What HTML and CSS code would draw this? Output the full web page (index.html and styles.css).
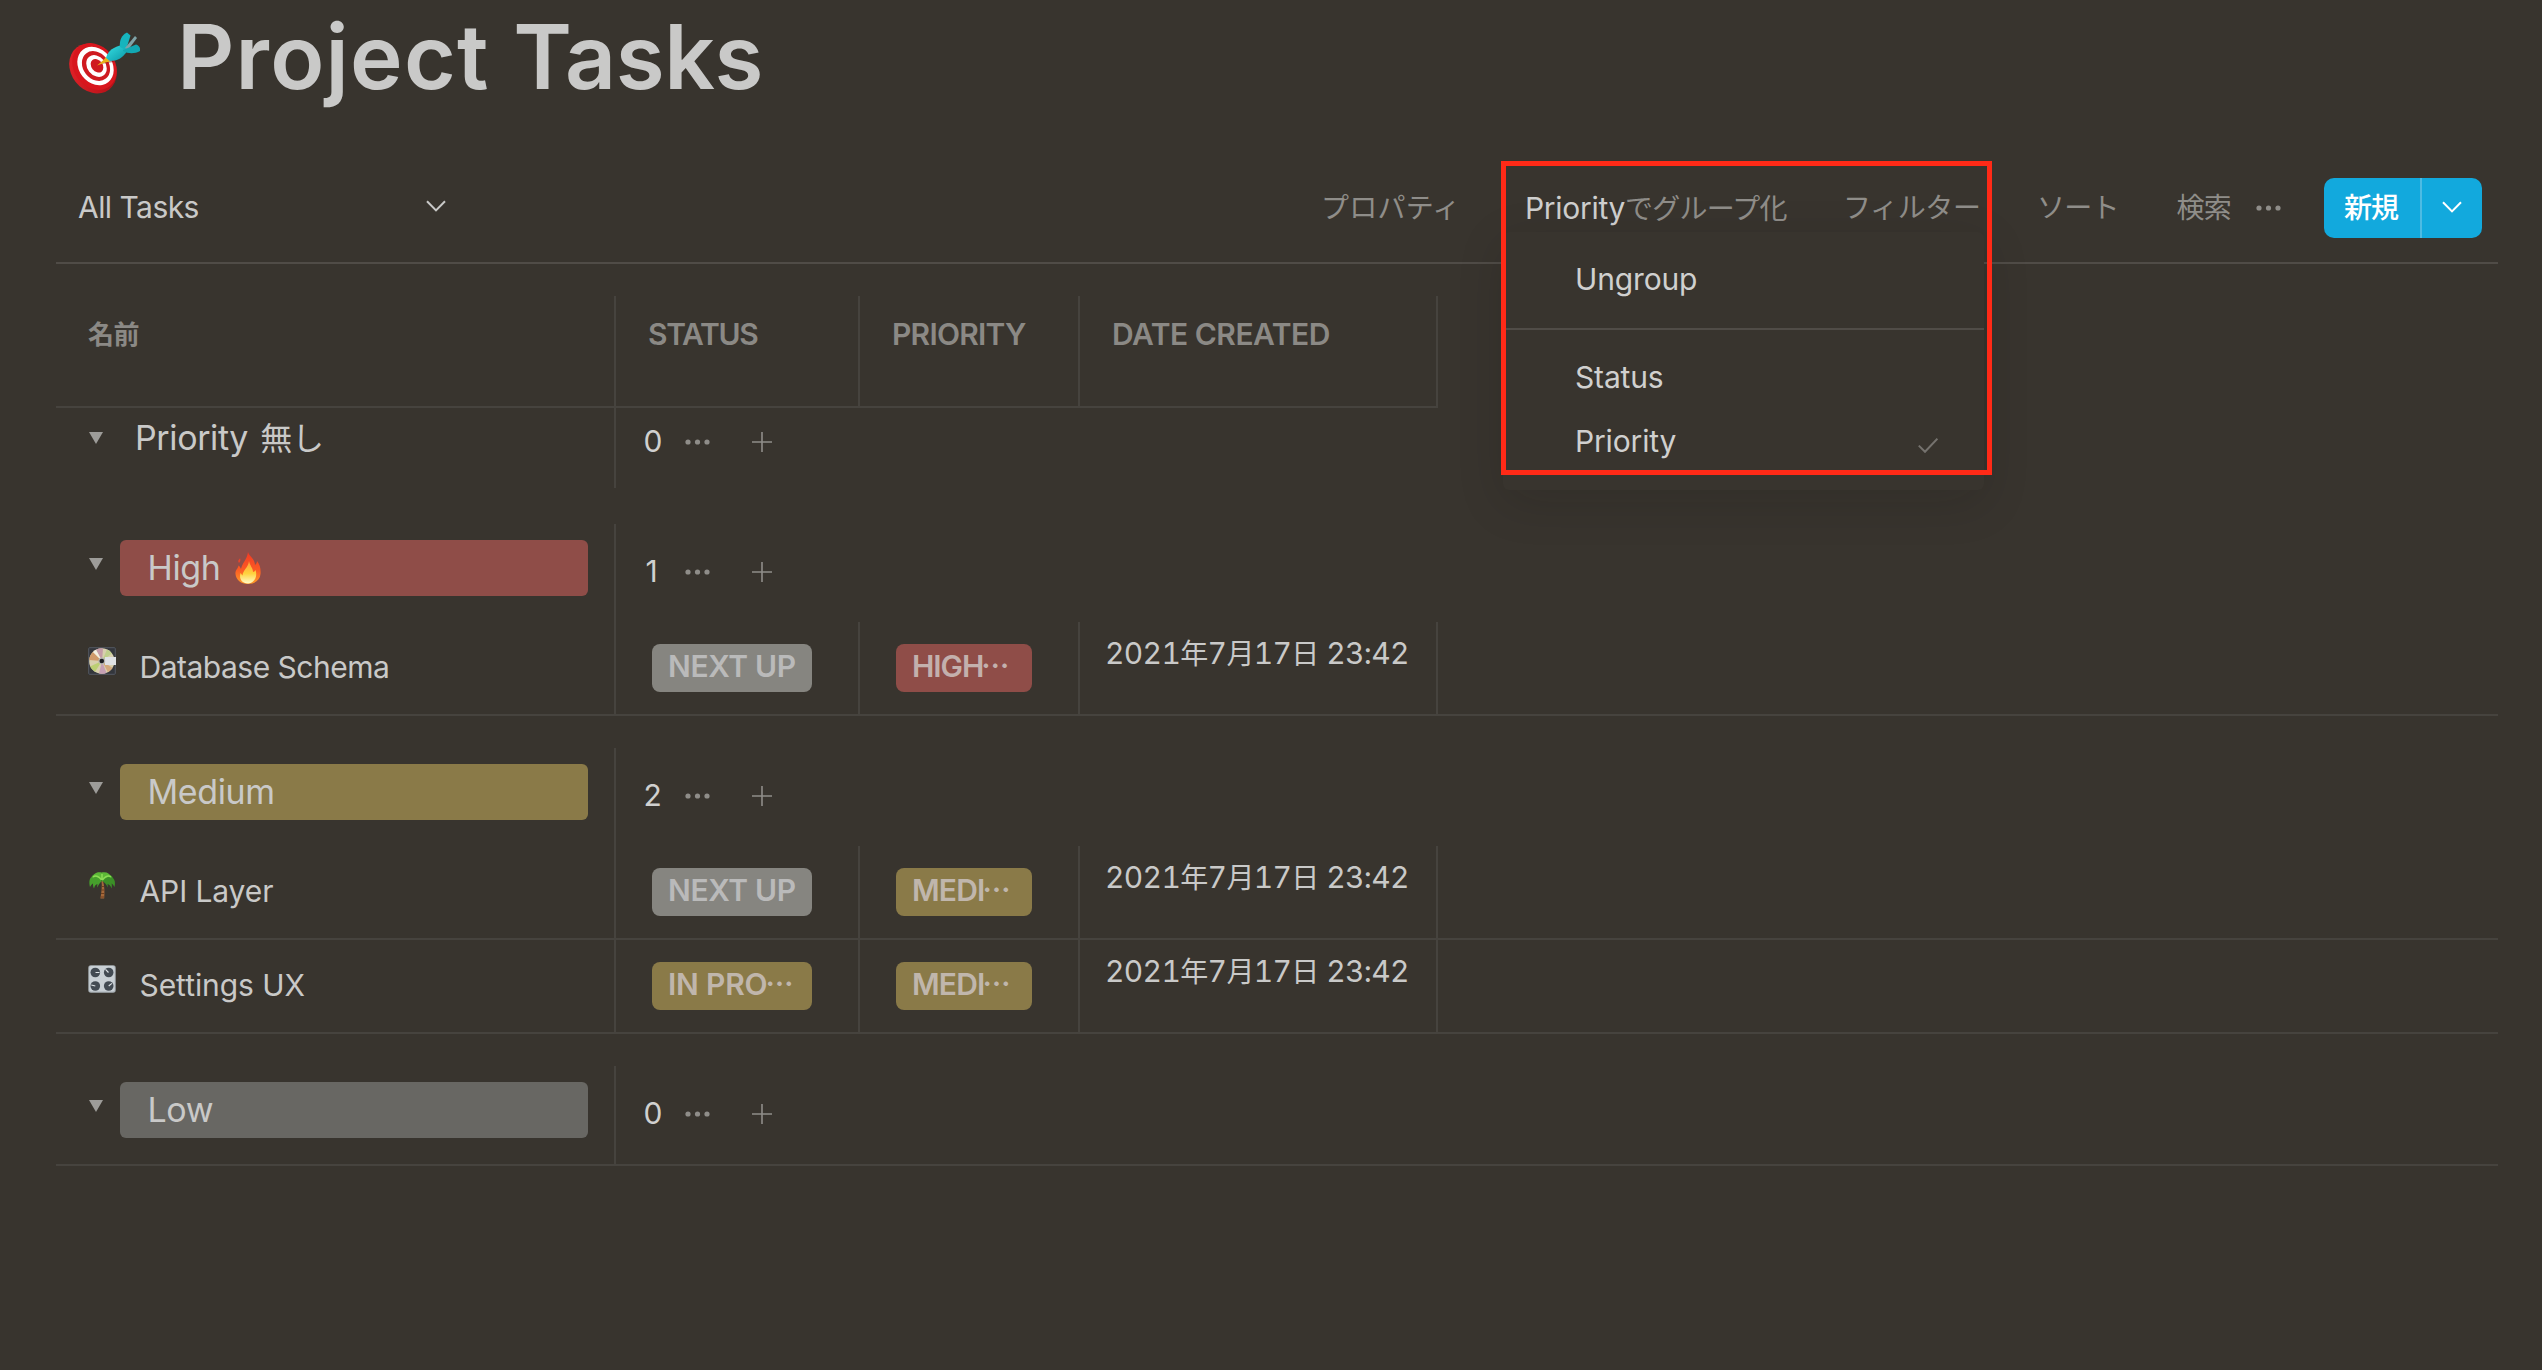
FILE: index.html
```html
<!DOCTYPE html>
<html lang="ja">
<head>
<meta charset="utf-8">
<title>Project Tasks</title>
<link rel="stylesheet" href="styles.css">
</head>
<body>
<svg class="defs" width="0" height="0" aria-hidden="true">
  <symbol id="i-chevron" viewBox="0 0 20 12"><path d="M1 1.2 10 10.4 19 1.2" fill="none" stroke="currentColor" stroke-width="2"/></symbol>
  <symbol id="i-dots" viewBox="0 0 26 6"><circle cx="3" cy="3" r="2.6"/><circle cx="12.500" cy="3" r="2.600"/><circle cx="22" cy="3" r="2.600"/></symbol>
  <symbol id="i-plus" viewBox="0 0 20 20"><path d="M10 0v20M0 10h20" fill="none" stroke="currentColor" stroke-width="1.6"/></symbol>
  <symbol id="i-tri" viewBox="0 0 14 12"><path d="M0 0h14L7 12z"/></symbol>
  <symbol id="i-check" viewBox="0 0 20 15"><path d="M.8 7.6 7 13.8 19.4.8" fill="none" stroke="currentColor" stroke-width="2"/></symbol>
</svg>

<header class="title-bar">
  <svg class="title-icon" viewBox="0 0 72 64">
    <defs>
      <linearGradient id="rim" x1="0" y1="0" x2="1" y2="1"><stop offset="0" stop-color="#e8242a"/><stop offset="1" stop-color="#a80d14"/></linearGradient>
      <linearGradient id="dart" x1="0" y1="0" x2="1" y2="1"><stop offset="0" stop-color="#36e0e4"/><stop offset="1" stop-color="#0b97a6"/></linearGradient>
    </defs>
    <ellipse cx="25" cy="37.500" rx="22" ry="26.5" transform="rotate(-38 25 37.500)" fill="url(#rim)"/>
    <ellipse cx="26.500" cy="35.500" rx="20.5" ry="25" transform="rotate(-38 26.500 35.500)" fill="#d8161d"/>
    <ellipse cx="27.500" cy="35" rx="16.6" ry="20.6" transform="rotate(-38 27.500 35)" fill="#fff"/>
    <ellipse cx="28" cy="35" rx="12.8" ry="16" transform="rotate(-38 28 35)" fill="#cf1a20"/>
    <ellipse cx="28.500" cy="35" rx="9.2" ry="11.8" transform="rotate(-38 28.500 35)" fill="#fff"/>
    <ellipse cx="29" cy="34.8" rx="5.6" ry="7.4" transform="rotate(-38 29 34.8)" fill="#cf1a20"/>
    <path d="M33 33 41 25 46 31z" fill="#7a1216" opacity=".45"/>
    <path d="M29 34.5 36 28.5 38 26l4 4.5-4.5 1z" fill="#e9b21c"/>
    <path d="M38 27C40 19 46 16 54 14l5 6C55 27 49 30 42 30z" fill="url(#dart)"/>
    <path d="M52 16C51 9 54 4 59 1.500l3.500 3L58 19z" fill="#16b4bd"/>
    <path d="M57 17 67 5l2 2-9 12z" fill="#7fa3a8"/>
    <path d="M55 19l13-5.500c3 1 5 4 4 6.500-5 3-12 3-17 0z" fill="#12a8b3"/>
  </svg>
  <h1 class="title"><span>Project</span> <span>Tasks</span></h1>
</header>

<nav class="toolbar">
  <div class="view-select">
    <span class="view-name">All Tasks</span>
    <svg class="chevron"><use href="#i-chevron"/></svg>
  </div>
  <div class="actions">
    <span class="action a-prop">プロパティ</span>
    <span class="action a-group"><b>Priority</b>でグループ化</span>
    <span class="action a-filter">フィルター</span>
    <span class="action a-sort">ソート</span>
    <span class="action a-search">検索</span>
    <svg class="dots"><use href="#i-dots"/></svg>
    <div class="new-btn"><span class="new-label">新規</span><span class="new-more"><svg class="chevron"><use href="#i-chevron"/></svg></span></div>
  </div>
  <div class="menu">
    <div class="menu-section"><div class="menu-item">Ungroup</div></div>
    <div class="menu-section">
      <div class="menu-item">Status</div>
      <div class="menu-item">Priority<svg class="check"><use href="#i-check"/></svg></div>
    </div>
  </div>
  <div class="highlight"></div>
</nav>

<main class="table">
  <div class="head">
    <div class="h-name">名前</div>
    <div class="h-status">STATUS</div>
    <div class="h-priority">PRIORITY</div>
    <div class="h-date">DATE CREATED</div>
  </div>

  <section class="group ungrouped">
    <div class="group-head">
      <div class="group-label"><svg class="tri"><use href="#i-tri"/></svg><span class="label-text">Priority <span class="jp-label">無し</span></span></div>
      <div class="group-count"><span>0</span><svg class="dots"><use href="#i-dots"/></svg><svg class="plus"><use href="#i-plus"/></svg></div>
    </div>
  </section>

  <section class="group">
    <div class="group-head">
      <div class="group-label"><svg class="tri"><use href="#i-tri"/></svg><span class="label-text pill red">High
        <svg class="fire" viewBox="0 0 26 32">
          <defs><linearGradient id="flame" x1="0" y1="0" x2="0" y2="1"><stop offset="0" stop-color="#f23a24"/><stop offset=".55" stop-color="#fb5a24"/><stop offset="1" stop-color="#ff9c26"/></linearGradient>
          <linearGradient id="core" x1="0" y1="0" x2="0" y2="1"><stop offset="0" stop-color="#ff9a3a"/><stop offset=".55" stop-color="#ffd23c"/><stop offset="1" stop-color="#fffbc8"/></linearGradient></defs>
          <path d="M13 0c1 4 7 7 7 13 1-1 2-2 2-4 3 4 4 8 3.500 13C25 28 20 32 13 32S1 28 .5 22C0 18 3 17 3.500 13.500 5 14.500 5.500 16 6 17 7 11 12 8 13 0z" fill="url(#flame)"/>
          <path d="M3.200 9.500c0-2 1.500-2 1.800-3.500.8 2 .3 4-1 5z" fill="#e8452c"/>
          <path d="M14 9c1 5 4 7 4 11 1 0 2-1 2.500-2 2 5 0 13-7.500 13.500C6 31.500 4 26 5.500 21c1 1 1.500 2 2 2.500C8 18 13 16 14 9z" fill="url(#core)"/>
        </svg></span></div>
      <div class="group-count"><span class="one">1</span><svg class="dots"><use href="#i-dots"/></svg><svg class="plus"><use href="#i-plus"/></svg></div>
    </div>
    <div class="row">
      <div class="c-name">
        <svg class="icon" viewBox="0 0 28 28">
          <rect width="28" height="28" rx="1.500" fill="#33363c"/><rect x=".7" y=".7" width="26.600" height="26.600" rx="1" fill="none" stroke="#54585f"/>
          <circle cx="13.800" cy="14" r="12.700" fill="#d8cfae"/>
          <path d="M14 14 8 2.800A12.700 12.700 0 0 1 15 1.400z" fill="#c39ba6"/>
          <path d="M14 14 1.200 13A12.700 12.700 0 0 1 5 4.900z" fill="#cf9a6a"/>
          <path d="M14 14 19 2.400A12.700 12.700 0 0 1 24 6.500z" fill="#bfcf8c"/>
          <path d="M14 14 2 19.500A12.700 12.700 0 0 0 7 24.700z" fill="#bccf74"/>
          <path d="M14 14 11 26.500A12.700 12.700 0 0 0 18.500 25.900z" fill="#c6a0b4"/>
          <path d="M14 14 20 25.200A12.700 12.700 0 0 0 24.600 21z" fill="#d3a97c"/>
          <path d="M14 14 5 4.900A12.700 12.700 0 0 1 8 2.800z" fill="#f3efe0"/>
          <rect x="17" y="10" width="11" height="8" fill="#dfe1e4"/>
          <circle cx="13.800" cy="14" r="3.400" fill="#b7b7b2"/><circle cx="13.800" cy="14" r="2.300" fill="#1e1f22"/>
        </svg>
        <span class="name n-database">Database Schema</span>
      </div>
      <div class="c-status"><span class="tag gray t-next">NEXT UP</span></div>
      <div class="c-priority"><span class="tag red t-high">HIGH<span class="jp">…</span></span></div>
      <div class="c-date">2021<span class="jp">年</span>7<span class="jp">月</span>17<span class="jp">日</span> 23:42</div>
    </div>
  </section>

  <section class="group">
    <div class="group-head">
      <div class="group-label"><svg class="tri"><use href="#i-tri"/></svg><span class="label-text pill yellow">Medium</span></div>
      <div class="group-count"><span>2</span><svg class="dots"><use href="#i-dots"/></svg><svg class="plus"><use href="#i-plus"/></svg></div>
    </div>
    <div class="row">
      <div class="c-name">
        <svg class="icon" viewBox="0 0 28 28">
          <path d="M15 10c1.500 5 1.800 11 1.200 17.500h-3.800C13.500 21 14.300 15 13.500 10z" fill="#a5683a"/>
          <path d="M13.600 15.500h2.600M13.400 19h2.900M13 22.500h3.400M12.600 26h3.600" stroke="#6e3f1e" stroke-width="1"/>
          <path d="M14 10C10 3 5 1.500 3.500 6 1 8 1 12 2 16c1-2 2-3 3-3.500 0 1.500 0 3.500 1 5 .8-3 2-4 3.500-4.500-.3 1-.3 2 0 3.500C10.500 13 12 12 14 10z" fill="#469f2c"/>
          <path d="M14 10c3.500-7 9-8 11-3 2 2 2.500 5 1.500 9-1.500-2.500-2-3-3-3.500.5 1.500.5 3 0 5-1-3-2.500-4-4-4.500.3 1 .3 2 0 3.500C18.500 13 17 12 14 10z" fill="#3b8f27"/>
          <path d="M4 7C6 1.500 10 .500 13.500 1.500 18 .300 22 2 24 7c-3-2-6-1-9.500 3C11 6 7 5 4 7z" fill="#5cb837"/>
          <path d="M13.500 9C11.500 5.500 8 4 5 6M14.500 9C16.500 5.500 20 4 23 6M14 9V3" fill="none" stroke="#8bdc55" stroke-width="1.500"/>
        </svg>
        <span class="name n-api">API Layer</span>
      </div>
      <div class="c-status"><span class="tag gray t-next">NEXT UP</span></div>
      <div class="c-priority"><span class="tag yellow t-medi">MEDI<span class="jp">…</span></span></div>
      <div class="c-date">2021<span class="jp">年</span>7<span class="jp">月</span>17<span class="jp">日</span> 23:42</div>
    </div>
    <div class="row">
      <div class="c-name">
        <svg class="icon" viewBox="0 0 28 28">
          <rect x=".3" y=".3" width="27.400" height="27.400" rx="2.600" fill="#a9b1b7"/><rect x="1.300" y="1" width="25.400" height="25.400" rx="2" fill="#c9d0d5"/>
          <g fill="#434b53"><circle cx="7.300" cy="7.500" r="4.800"/><circle cx="20.700" cy="7.500" r="4.800"/><circle cx="7.300" cy="21" r="4.800"/><circle cx="20.700" cy="21" r="4.800"/></g>
          <path d="M7.500 7.500h4M20.500 7.500l-3-3.200M7.300 21l-4-1M20.700 21l3.200-2.600" stroke="#dfe4e7" stroke-width="1.200"/>
        </svg>
        <span class="name n-settings">Settings UX</span>
      </div>
      <div class="c-status"><span class="tag yellow t-prog">IN PRO<span class="jp">…</span></span></div>
      <div class="c-priority"><span class="tag yellow t-medi">MEDI<span class="jp">…</span></span></div>
      <div class="c-date">2021<span class="jp">年</span>7<span class="jp">月</span>17<span class="jp">日</span> 23:42</div>
    </div>
  </section>

  <section class="group last">
    <div class="group-head">
      <div class="group-label"><svg class="tri"><use href="#i-tri"/></svg><span class="label-text pill dim">Low</span></div>
      <div class="group-count"><span>0</span><svg class="dots"><use href="#i-dots"/></svg><svg class="plus"><use href="#i-plus"/></svg></div>
    </div>
  </section>
</main>
</body>
</html>
```
FILE: styles.css
```css
* { box-sizing: border-box; }
html, body { margin: 0; }
body {
  min-height: 1370px;
  padding: 0 44px 0 56px;
  background: #38342e;
  color: #c9c9c8;
  font: 400 30px/40px Inter, "Noto Sans CJK JP", sans-serif;
}
svg { display: block; flex: none; fill: currentColor; }
.defs { position: absolute; }

/* Page title */
.title-bar { display: flex; height: 152px; padding-left: 12px; }
.title-icon { width: 72px; height: 64px; margin-top: 31px; }
.title { margin: 0 0 0 37px; font-size: 89px; font-weight: 600; line-height: 113px; letter-spacing: 1.2px; white-space: nowrap; }
.title span + span { letter-spacing: -.4px; }

/* Toolbar */
.toolbar {
  position: relative;
  display: flex;
  justify-content: space-between;
  align-items: center;
  height: 112px;
  padding: 0 16px 0 22px;
  border-bottom: 2px solid #504c47;
}
.view-select { display: flex; align-items: center; justify-content: space-between; width: 368px; }
.view-name { letter-spacing: -.55px; }
.chevron { width: 20px; height: 12px; margin-top: -3px; }
.actions {
  display: grid;
  grid-template-columns: 204px 318px 194px 139.500px 79px 68.500px 158px;
  align-items: center;
  color: #8f8d89;
}
.action { padding-top: 2px; font-size: 28px; white-space: nowrap; }
.a-prop { letter-spacing: .25px; }
.a-group { letter-spacing: -.8px; }
.a-group b { color: #cfcfce; font-size: 30px; font-weight: 400; letter-spacing: -.3px; }
.a-filter { letter-spacing: -.38px; }
.a-sort, .a-search { letter-spacing: -.8px; }
.dots { width: 26px; height: 6px; margin-top: 2px; }
.new-btn { display: flex; height: 60px; margin-top: 2px; overflow: hidden; border-radius: 10px; background: #12a9dd; color: #fff; }
.new-label { width: 98px; padding-left: 20px; border-right: 2px solid #4dbbe3; font-size: 28px; font-weight: 500; line-height: 60px; letter-spacing: -1px; }
.new-more { display: flex; flex: 1; align-items: center; justify-content: center; }

/* Grouping menu */
.menu {
  position: absolute;
  top: 80px;
  left: 1447px;
  width: 481px;
  border-radius: 6px;
  background: #38342e;
  box-shadow: 0 12px 48px rgba(15, 15, 15, .14);
}
.menu-section { padding: 15px 0 17px; }
.menu-section + .menu-section { border-top: 2px solid #504c47; }
.menu-item { display: flex; align-items: center; justify-content: space-between; height: 64px; padding: 0 46px 0 72px; color: #d0d0cf; letter-spacing: -.15px; }
.check { width: 20px; height: 15px; margin-top: 9px; color: #75726e; }
.highlight { position: absolute; top: 8.500px; left: 1444.500px; width: 491px; height: 314px; border: 5px solid #ff2a17; }

/* Table */
.table { padding-top: 32px; }
.head, .row { display: grid; grid-template-columns: 560px 244px 220px 358px; }
.head { width: 1382px; height: 112px; border-bottom: 2px solid #46433e; color: #8b8985; font-weight: 600; }
.head > div { padding: 18px 0 0 32px; border-right: 2px solid #46433e; }
.head .h-name { padding-top: 19px; font-size: 26px; font-weight: 700; letter-spacing: -.5px; }
.h-status { letter-spacing: -1.300px; }
.h-priority { letter-spacing: -.76px; }
.h-date { letter-spacing: -.5px; }

.group { margin-top: 32px; }
.group.ungrouped { margin: 0 0 36px; }
.ungrouped + .group { margin-top: 0; }
.group.last { border-bottom: 2px solid #46433e; }
.group-head { display: grid; grid-template-columns: 560px 1fr; height: 98px; }
.ungrouped .group-head { height: 80px; }
.group-label { display: flex; padding: 16px 26px 0 33px; border-right: 2px solid #46433e; }
.tri { width: 14px; height: 12px; margin: 18px 17px 0 0; color: #9d9c99; }
.label-text { flex: 1; height: 56px; padding-left: 15px; font-size: 34px; line-height: 55px; letter-spacing: -.38px; }
.jp-label { margin-left: 3px; font-size: 32px; line-height: 0; }
.label-text.pill { display: flex; padding-left: 27.500px; border-radius: 6px; }
.ungrouped .group-label { padding-top: 2px; }
.ungrouped .tri { margin-top: 22px; }
.fire { width: 26px; height: 32px; margin: 12px 0 0 15px; }
.group-count {
  display: grid;
  grid-template-columns: 41px 67px 20px;
  align-items: center;
  align-self: start;
  height: 40px;
  margin-top: 27px;
  padding-left: 27.500px;
  color: #d0d0cf;
}
.ungrouped .group-count { margin-top: 13px; }
.one { padding-left: 2px; }
.group-count svg { color: #8f8d89; }
.plus { width: 20px; height: 20px; margin-top: 2px; }

.row { height: 94px; border-bottom: 2px solid #46433e; }
.row > div { border-right: 2px solid #46433e; }
.c-name { display: flex; padding: 25px 0 0 32px; }
.icon { width: 28px; height: 28px; margin: 0 23.500px 0 0; }
.n-database { letter-spacing: -.5px; }
.n-api { letter-spacing: -.1px; }
.n-settings { letter-spacing: -.06px; }
.c-status, .c-priority { padding: 22px 0 0 36px; }
.tag { display: block; width: 160px; height: 48px; padding-left: 16px; border-radius: 8px; font-weight: 600; line-height: 44px; white-space: nowrap; }
.c-priority .tag { width: 136px; }
.jp { font-family: "Noto Sans CJK JP", sans-serif; font-size: 28px; line-height: 0; }
.tag .jp { margin-left: -2px; }
.t-next { letter-spacing: -.35px; }
.t-prog { letter-spacing: -.21px; }
.t-high { letter-spacing: -1.050px; }
.t-medi { letter-spacing: -.83px; }
.c-date { padding: 11px 0 0 25px; font-variant-numeric: tabular-nums; letter-spacing: -.65px; white-space: nowrap; }

/* Option colours */
.red { background: #8f4d48; }
.yellow { background: #8a7a48; }
.dim { background: #686763; }
.gray { background: #868580; }
.tag.red, .tag.yellow { color: #c0b6ac; }
.tag.red { color: #c3b0ad; }
.tag.gray { color: #bababa; }
```
